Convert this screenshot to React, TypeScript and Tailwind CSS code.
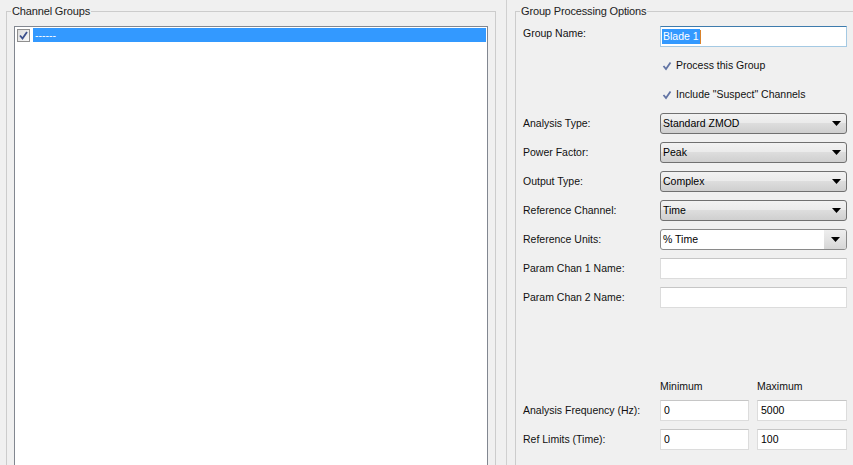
import React from 'react'

const FONT = "font-['Liberation_Sans',Arial,sans-serif]"

function Arrow() {
  return (
    <svg width="9" height="5" viewBox="0 0 9 5" className="block">
      <path d="M0 0 H9 L4.5 5 Z" fill="#000" />
    </svg>
  )
}

function Combo({ value }: { value: string }) {
  return (
    <div className="flex h-[21px] w-[187px] items-center justify-between rounded-[3px] border border-[#707070] bg-[linear-gradient(#f2f2f2_0%,#ebebeb_45%,#dddddd_50%,#cfcfcf_100%)] pl-[2px] pr-[5px]">
      <span className="text-[10.5px] leading-none text-black">{value}</span>
      <Arrow />
    </div>
  )
}

function EditCombo({ value }: { value: string }) {
  return (
    <div className="flex h-[21px] w-[187px] items-stretch rounded-[3px] border border-[#8a8a8a] bg-white">
      <span className="flex flex-1 items-center pl-[2px] text-[10.5px] leading-none text-black">{value}</span>
      <div className="flex w-[22px] items-center justify-center rounded-r-[2px] bg-[linear-gradient(#eeeeee_0%,#e3e3e3_50%,#d6d6d6_100%)]">
        <Arrow />
      </div>
    </div>
  )
}

function TextBox({ value = '', w = 'w-[187px]' }: { value?: string; w?: string }) {
  return (
    <div className={`flex h-[21px] ${w} items-center border border-[#dcdcdc] border-t-[#c6c6c6] bg-white pl-[3px]`}>
      <span className="text-[10.5px] leading-none text-black">{value}</span>
    </div>
  )
}

function Check() {
  return (
    <svg width="10" height="10" viewBox="0 0 10 10" className="block">
      <path d="M1.5 5 L4 8 L8.5 1.5" fill="none" stroke="#6274a4" strokeWidth="1.8" />
    </svg>
  )
}

function Row({ label, children, top = false }: { label: string; children: React.ReactNode; top?: boolean }) {
  return (
    <div className={`flex h-[21px] ${top ? 'items-start' : 'items-center'}`}>
      <span className={`w-[137px] text-[10.5px] leading-none text-[#111] ${top ? 'pt-[2px]' : ''}`}>{label}</span>
      {children}
    </div>
  )
}

export default function App() {
  return (
    <div className={`flex h-[465px] w-[853px] overflow-hidden bg-[#f0f0f0] ${FONT}`}>
      {/* Channel Groups */}
      <div className="ml-[6px] mt-[11px] h-[470px] w-[490px] shrink-0 border-l border-r border-t border-[#cccccc]">
        <div className="-mt-[8px] ml-[4px] block h-[14px] w-fit bg-[#f0f0f0] px-[1px] text-[11px] leading-[14px] tracking-[-0.15px] text-[#222]">
          Channel Groups
        </div>
        <div className="ml-[7px] mt-[8px] h-[460px] w-[474px] border border-[#828790] bg-white p-[1px]">
          <div className="flex h-[14px] items-center">
            <div className="ml-[1px] flex h-[13px] w-[13px] items-center justify-center border border-[#8f8f8f] bg-[linear-gradient(135deg,#dcdcdc,#f8f8f8)]">
              <svg width="9" height="9" viewBox="0 0 9 9" className="block">
                <path d="M1 4.5 L3.5 7.5 L8 1" fill="none" stroke="#3b4f8c" strokeWidth="1.8" />
              </svg>
            </div>
            <div className="ml-[3px] flex h-[14px] flex-1 items-center bg-[#3399ff] pl-[2px] text-[10.5px] leading-none text-white">
              ------
            </div>
          </div>
        </div>
      </div>

      {/* splitter */}
      <div className="ml-[10px] h-[465px] w-px shrink-0 bg-[#d0d0d0]" />

      {/* Group Processing Options */}
      <div className="ml-[8px] mt-[11px] h-[470px] flex-1 border-l border-t border-[#cccccc]">
        <div className="-mt-[8px] ml-[4px] block h-[14px] w-fit bg-[#f0f0f0] px-[1px] text-[11px] leading-[14px] tracking-[-0.15px] text-[#222]">
          Group Processing Options
        </div>
        <div className="mt-[8px] flex flex-col pl-[7px]">
          <div className="flex flex-col gap-[8px]">
            <Row label="Group Name:" top>
              <div className="flex h-[21px] w-[187px] items-center border border-[#a4c9e3] border-t-[#3d7bad] bg-white pl-[1px]">
                <span className="flex h-[15px] items-center bg-[#3399ff] px-[1px] text-[10.5px] leading-none text-white">Blade 1</span>
                <span className="h-[14px] w-px bg-[#d9822b]" />
              </div>
            </Row>
            <Row label="">
              <div className="flex items-center gap-[4px] pl-[2px]">
                <Check />
                <span className="text-[10.5px] leading-none text-[#111]">Process this Group</span>
              </div>
            </Row>
            <Row label="">
              <div className="flex items-center gap-[4px] pl-[2px]">
                <Check />
                <span className="text-[10.5px] leading-none text-[#111]">Include "Suspect" Channels</span>
              </div>
            </Row>
            <Row label="Analysis Type:"><Combo value="Standard ZMOD" /></Row>
            <Row label="Power Factor:"><Combo value="Peak" /></Row>
            <Row label="Output Type:"><Combo value="Complex" /></Row>
            <Row label="Reference Channel:"><Combo value="Time" /></Row>
            <Row label="Reference Units:"><EditCombo value="% Time" /></Row>
            <Row label="Param Chan 1 Name:"><TextBox /></Row>
            <Row label="Param Chan 2 Name:"><TextBox /></Row>
          </div>

          <div className="mt-[71px] flex h-[14px] items-center text-[10.5px] leading-none text-[#111]">
            <span className="w-[137px]" />
            <span className="w-[97px]">Minimum</span>
            <span>Maximum</span>
          </div>
          <div className="mt-[7px] flex flex-col gap-[8px]">
            <Row label="Analysis Frequency (Hz):">
              <div className="flex gap-[8px]">
                <TextBox value="0" w="w-[89px]" />
                <TextBox value="5000" w="w-[90px]" />
              </div>
            </Row>
            <Row label="Ref Limits (Time):">
              <div className="flex gap-[8px]">
                <TextBox value="0" w="w-[89px]" />
                <TextBox value="100" w="w-[90px]" />
              </div>
            </Row>
          </div>
        </div>
      </div>
    </div>
  )
}
